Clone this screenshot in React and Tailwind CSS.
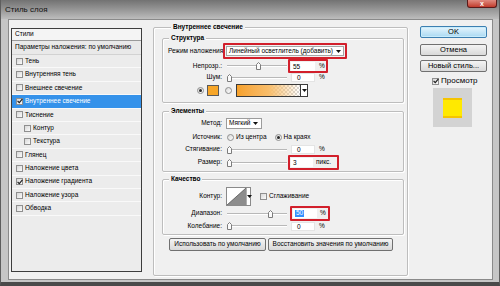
import React from 'react';

function Check({ checked = false }) {
  return (
    <span className="flex h-[7px] w-[7px] shrink-0 items-center justify-center border border-[#8f8f8f] bg-gradient-to-br from-[#d8d8d8] to-[#fbfbfb]">
      {checked && (
        <svg width="6" height="6" viewBox="0 0 6 6" className="shrink-0">
          <path d="M0.6 3 L2.3 4.7 L5.4 0.8" fill="none" stroke="#1e1e1e" strokeWidth="1.1" />
        </svg>
      )}
    </span>
  );
}

function Radio({ checked = false }) {
  return (
    <span className="flex h-[7px] w-[7px] shrink-0 items-center justify-center rounded-full border border-[#8f8f8f] bg-gradient-to-br from-[#d8d8d8] to-white">
      {checked && <span className="h-[3px] w-[3px] rounded-full bg-[#2a2a2a]" />}
    </span>
  );
}

function Arrow() {
  return (
    <svg width="5" height="3" viewBox="0 0 5 3" className="shrink-0">
      <path d="M0 0H5L2.5 3Z" fill="#111" />
    </svg>
  );
}

function Thumb() {
  return (
    <svg width="5" height="8" viewBox="0 0 5 8">
      <path d="M0.5 7.5V2.5L2.5 0.5L4.5 2.5V7.5Z" fill="#fbfbfb" stroke="#7c7c7c" />
    </svg>
  );
}

function Slider({ pos }) {
  return (
    <div className="relative ml-[2px] h-[8px] w-[60px] shrink-0">
      <div className="mt-[3px] h-[2px] border-t border-b border-t-[#b8b8b8] border-b-white" />
      <span className={`absolute top-0 flex ${pos}`}>
        <Thumb />
      </span>
    </div>
  );
}

function Label({ children }) {
  return <div className="w-[62px] shrink-0 pr-[3px] text-right leading-none">{children}</div>;
}

function Num({ value, unit = '%' }) {
  return (
    <div className="ml-[1px] flex w-[40px] shrink-0 items-center border-2 border-transparent">
      <div className="ml-[1px] h-[9px] w-[24px] border border-[#e4e4e4] bg-white pl-[5px] leading-[8px]">{value}</div>
      <span className="ml-[4px] leading-none">{unit}</span>
    </div>
  );
}

function Fieldset({ title, className = '', children }) {
  return (
    <fieldset
      className={`rounded-[2px] border border-[#bdbdbd] shadow-[inset_1px_1px_0_#ffffff,1px_1px_0_#ffffff] ${className}`}
    >
      <legend className="ml-[6px] bg-[#f0f0f0] px-[2px] font-bold leading-[10px]">{title}</legend>
      {children}
    </fieldset>
  );
}

function Btn({ children, className = '' }) {
  return (
    <div
      className={`flex items-center justify-center rounded-[2px] border border-[#707070] bg-gradient-to-b from-[#f4f4f4] to-[#d9d9d9] leading-none ${className}`}
    >
      {children}
    </div>
  );
}

const items = [
  { t: 'Тень' },
  { t: 'Внутренняя тень' },
  { t: 'Внешнее свечение' },
  { t: 'Внутреннее свечение', c: true, s: true },
  { t: 'Тиснение' },
  { t: 'Контур', sub: true },
  { t: 'Текстура', sub: true },
  { t: 'Глянец' },
  { t: 'Наложение цвета' },
  { t: 'Наложение градиента', c: true },
  { t: 'Наложение узора' },
  { t: 'Обводка' },
];

export default function App() {
  return (
    <div className="flex h-[286px] w-[500px] flex-col overflow-hidden whitespace-nowrap border-x border-b-[4px] border-x-[#5e5e5e] border-b-[#4a4a4a] bg-[#c6c6c6] font-['Liberation_Sans',Arial,sans-serif] text-[6.5px] text-black">
      {/* title bar */}
      <div className="flex h-[19px] shrink-0 items-start justify-between bg-gradient-to-b from-[#727272] via-[#969696] to-[#bdbdbd]">
        <div className="pl-[4px] pt-[5px] text-[8px] leading-[10px] text-[#111]">Стиль слоя</div>
        <div className="mr-[2px] flex h-[8px] w-[30px] items-center justify-center rounded-b-[3px] border border-t-0 border-[#5a1a1a] bg-gradient-to-b from-[#e08a80] to-[#c0392b] text-[7px] font-bold leading-none text-white">
          x
        </div>
      </div>

      {/* body frame */}
      <div className="flex flex-1 pl-[7px] pr-[6px] pb-[2px]">
        <div className="flex h-[261px] w-[485px] items-start border border-[#8a8a8a] bg-[#f0f0f0] pl-[2px] pt-[1px]">
          {/* styles list */}
          <div className="mt-[7px] flex h-[244px] w-[131px] shrink-0 flex-col border border-[#3d3d3d] bg-[#ececec]">
            <div className="flex h-[12px] shrink-0 items-center border-b border-[#9a9a9a] bg-[#f4f4f4] pl-[3px] leading-none">
              Стили
            </div>
            <div className="flex h-[14px] shrink-0 items-center border-b border-[#d2d2d2] bg-[#e9e9e9] pl-[3px] leading-none">
              Параметры наложения: по умолчанию
            </div>
            {items.map((it) => (
              <div
                key={it.t}
                className={`flex h-[13.4px] shrink-0 items-center gap-[2px] border-b border-[#f9f9f9] leading-none ${
                  it.sub ? 'pl-[12px]' : 'pl-[4px]'
                } ${it.s ? 'bg-[#3592ea] text-white' : ''}`}
              >
                <Check checked={it.c} />
                <span>{it.t}</span>
              </div>
            ))}
          </div>

          {/* middle panel */}
          <fieldset className="ml-[11px] h-[255px] w-[255px] shrink-0 rounded-[2px] border border-[#bdbdbd] pl-[8px] shadow-[inset_1px_1px_0_#ffffff,1px_1px_0_#ffffff]">
            <legend className="ml-[9px] bg-[#f0f0f0] px-[2px] font-bold leading-[12px]">
              Внутреннее свечение
            </legend>

            {/* Structure */}
            <Fieldset title="Структура" className="w-[242px] pb-[5px]">
              <div className="flex h-[16px] items-center">
                <div className="w-[60px] shrink-0 pl-[5px] leading-none">Режим наложения:</div>
                <div className="h-[16px] w-[124px] shrink-0 rounded-[1px] border-2 border-[#d21f2b] p-[1px]">
                  <div className="flex h-full items-center border border-[#a5a5a5] bg-white pl-[2px] pr-[2px] leading-none">
                    <span>Линейный осветлитель (добавить)</span>
                    <span className="ml-auto flex">
                      <Arrow />
                    </span>
                  </div>
                </div>
              </div>
              <div className="flex h-[14px] items-center">
                <Label>Непрозр.:</Label>
                <Slider pos="left-[29px]" />
                <div className="ml-[1px] flex h-[14px] w-[40px] shrink-0 items-center rounded-[1px] border-2 border-[#d21f2b]">
                  <div className="ml-[1px] h-[9px] w-[24px] bg-white pl-[2px] leading-[9px]">55</div>
                  <span className="ml-[4px] leading-none">%</span>
                </div>
              </div>
              <div className="flex h-[9px] items-center">
                <Label>Шум:</Label>
                <Slider pos="left-[0px]" />
                <Num value="0" />
              </div>
              <div className="mt-[2px] flex h-[13px] items-center">
                <span className="ml-[34px] flex">
                  <Radio checked />
                </span>
                <span className="ml-[3px] h-[11px] w-[12px] border border-[#5a5a5a] bg-[#f7a628]" />
                <span className="ml-[6px] flex">
                  <Radio />
                </span>
                <div className="ml-[4px] flex h-[13px] w-[72px] border border-[#3a3a3a]">
                  <div className="h-full flex-1 bg-[repeating-conic-gradient(#d6d6d6_0_25%,#ffffff_0_50%)] bg-[length:4px_4px]">
                    <div className="h-full w-full bg-gradient-to-r from-[#f6a12a] via-[#f8bd6a] to-transparent" />
                  </div>
                  <div className="flex w-[7px] items-center justify-center border-l border-[#3a3a3a] bg-white">
                    <Arrow />
                  </div>
                </div>
              </div>
            </Fieldset>

            {/* Elements */}
            <Fieldset title="Элементы" className="mt-[3px] w-[242px] pb-[1px]">
              <div className="flex h-[15px] items-center">
                <Label>Метод:</Label>
                <div className="ml-[1px] flex h-[11px] w-[36px] items-center border border-[#9c9c9c] bg-white pl-[2px] pr-[3px] leading-none">
                  <span>Мягкий</span>
                  <span className="ml-auto flex">
                    <Arrow />
                  </span>
                </div>
              </div>
              <div className="flex h-[13px] items-center">
                <Label>Источник:</Label>
                <span className="ml-[2px] flex">
                  <Radio />
                </span>
                <span className="ml-[2px] leading-none">Из центра</span>
                <span className="ml-[8px] flex">
                  <Radio checked />
                </span>
                <span className="ml-[2px] leading-none">На краях</span>
              </div>
              <div className="flex h-[11px] items-center">
                <Label>Стягивание:</Label>
                <Slider pos="left-[0px]" />
                <Num value="0" />
              </div>
              <div className="flex h-[15px] items-center">
                <Label>Размер:</Label>
                <Slider pos="left-[0px]" />
                <div className="ml-[1px] flex h-[15px] w-[51px] shrink-0 items-center rounded-[1px] border-2 border-[#d21f2b]">
                  <div className="ml-[1px] h-[9px] w-[22px] bg-white pl-[2px] leading-[9px]">3</div>
                  <span className="ml-[3px] leading-none">пикс.</span>
                </div>
              </div>
            </Fieldset>

            {/* Quality */}
            <Fieldset title="Качество" className="mt-[2px] w-[242px] pb-[3px]">
              <div className="mt-[3px] flex h-[19px] items-center">
                <Label>Контур:</Label>
                <div className="ml-[1px] flex h-[19px] w-[25px] border border-[#8a8a8a] bg-white">
                  <svg width="19" height="17" viewBox="0 0 19 17" className="shrink-0">
                    <polygon points="0,17 19,0 19,17" fill="#8d8d8d" />
                    <line x1="0" y1="17" x2="19" y2="0" stroke="#555" strokeWidth="0.8" />
                  </svg>
                  <div className="flex flex-1 items-center justify-center border-l border-[#b0b0b0]">
                    <Arrow />
                  </div>
                </div>
                <span className="ml-[9px] flex">
                  <Check />
                </span>
                <span className="ml-[2px] leading-none">Сглаживание</span>
              </div>
              <div className="flex h-[15px] items-center">
                <Label>Диапазон:</Label>
                <Slider pos="left-[41px]" />
                <div className="ml-[3px] flex h-[15px] w-[40px] shrink-0 items-center rounded-[1px] border-2 border-[#d21f2b]">
                  <div className="ml-[1px] flex h-[9px] w-[24px] items-center bg-white pl-[2px] leading-none">
                    <span className="bg-[#3390ff] px-[1px] text-white">50</span>
                  </div>
                  <span className="ml-[3px] leading-none">%</span>
                </div>
              </div>
              <div className="flex h-[10px] items-center">
                <Label>Колебание:</Label>
                <Slider pos="left-[0px]" />
                <Num value="0" />
              </div>
            </Fieldset>

            <div className="mt-[3px] flex gap-[2px] pl-[7px]">
              <Btn className="h-[13px] w-[97px]">Использовать по умолчанию</Btn>
              <Btn className="h-[13px] w-[125px]">Восстановить значения по умолчанию</Btn>
            </div>
          </fieldset>

          {/* right column */}
          <div className="ml-[12px] mt-[5px] flex w-[67px] shrink-0 flex-col text-[7.5px]">
            <div className="flex h-[12px] items-center justify-center rounded-[2px] border border-[#3c7fb1] bg-gradient-to-b from-[#e6f5fd] to-[#a9d9f2] leading-none shadow-[inset_0_0_0_1px_#c8ecfb]">
              OK
            </div>
            <Btn className="mt-[6px] h-[12px]">Отмена</Btn>
            <Btn className="mt-[4px] h-[12px]">Новый стиль...</Btn>
            <div className="mt-[4px] flex h-[10px] items-center pl-[12px]">
              <Check checked />
              <span className="ml-[2px] text-[8px] leading-none">Просмотр</span>
            </div>
            <div className="ml-[13px] mt-[2px] flex h-[39px] w-[39px] items-center justify-center bg-[#d3d3d3]">
              <div className="h-[20px] w-[19px] bg-[#ffe900] shadow-[inset_0_2px_0_#f5c400,inset_0_-2px_0_#f5c400]" />
            </div>
          </div>
        </div>
      </div>
    </div>
  );
}
